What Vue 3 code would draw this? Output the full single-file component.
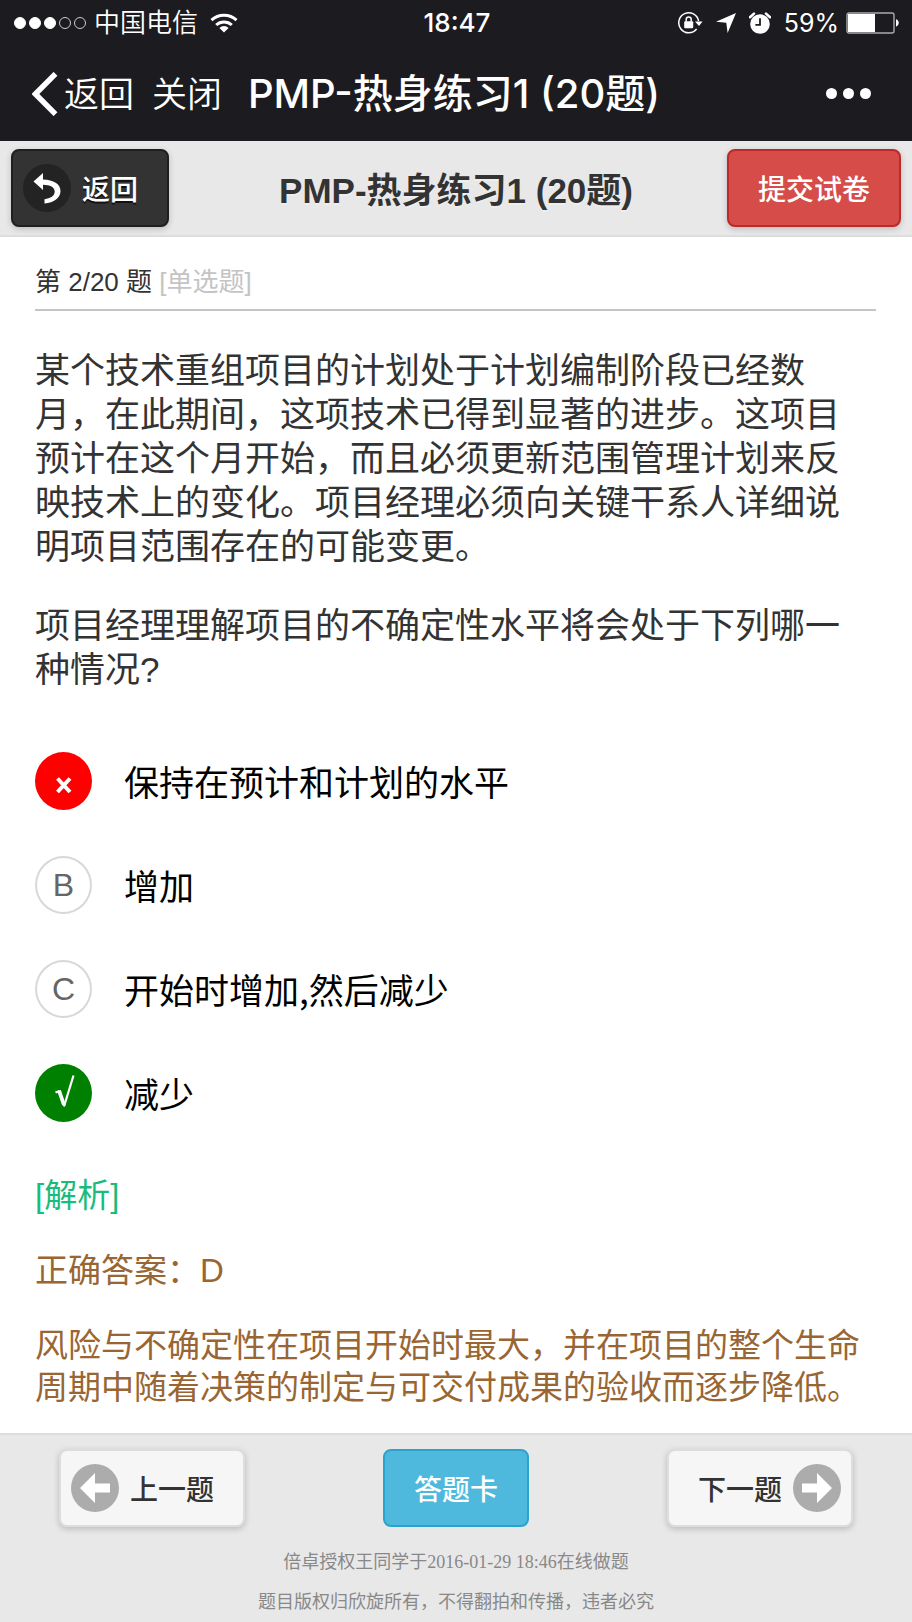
<template>
  <div class="page" lang="zh-CN">
    <div class="top">
      <div class="status-bar">
        <div class="status-left">
          <span class="signal">
            <i v-for="n in 5" :key="n" :class="{ on: n <= 3 }"></i>
          </span>
          <span class="carrier">中国电信</span>
          <svg class="wifi" width="28" height="20" viewBox="0 0 28 20" fill="none" stroke="#fff" stroke-width="3">
            <path d="M1.5 7.2a18 18 0 0 1 25 0" />
            <path d="M6.2 12a11.5 11.5 0 0 1 15.6 0" />
            <path d="M14 19.5l-4.6-4.6a6.8 6.8 0 0 1 9.2 0z" fill="#fff" stroke="none" />
          </svg>
        </div>
        <span class="time">18:47</span>
        <div class="status-right">
          <svg width="26" height="24" viewBox="0 0 26 24" fill="none" stroke="#fff" stroke-width="1.5">
            <path d="M21.6 10a10 10 0 1 0-2 8" />
            <path d="M18 10.5h7.6L22 15z" fill="#fff" stroke="none" />
            <path d="M9.2 10.5V8.6a2.5 2.5 0 0 1 5 0v1.9" />
            <rect x="7.2" y="10.3" width="9" height="7" rx="1" fill="#fff" stroke="none" />
          </svg>
          <svg width="20" height="20" viewBox="0 0 20 20" fill="#fff">
            <path d="M20 0L11.6 20 10.3 9.7 0 8.8z" />
          </svg>
          <svg width="22" height="22" viewBox="0 0 22 22" fill="none">
            <circle cx="11" cy="12" r="9.8" fill="#fff" />
            <path d="M1 5.2L5 1.6M21 5.2L17 1.6" stroke="#fff" stroke-width="2.6" stroke-linecap="round" />
            <path d="M11 6.2v6.6H6.4" stroke="#1c1b20" stroke-width="1.8" />
          </svg>
          <span class="percent">59%</span>
          <svg width="54" height="22" viewBox="0 0 54 22" fill="none">
            <rect x="1" y="1" width="47" height="20" rx="2" stroke="#aaa" stroke-width="1.4" />
            <path d="M2 2h27v18H2z" fill="#fff" />
            <path d="M50 7.2a4 4 0 0 1 0 7.6z" fill="#fff" />
          </svg>
        </div>
      </div>

      <nav class="nav-bar">
        <div class="nav-left">
          <a href="#" class="nav-back">
            <svg width="26" height="44" viewBox="0 0 26 44" fill="none" stroke="#fff" stroke-width="5.4">
              <path d="M23.5 1.800L3.400 22l20.100 20.200" />
            </svg>
            返回
          </a>
          <a href="#">关闭</a>
        </div>
        <span class="nav-title">PMP-热身练习1 (20题)</span>
        <button type="button" class="more" aria-label="更多"><i></i><i></i><i></i></button>
      </nav>
    </div>

    <header class="header">
      <button type="button" class="btn btn-dark">
        <svg width="48" height="48" viewBox="0 0 48 48">
          <circle cx="24" cy="24" r="24" fill="#232323" />
          <path d="M20 9v6.500c10.500.2 17.500 4.500 17.500 11.500 0 7-6.500 11.800-16 12.500v-4.300c6-.7 10.200-3.400 10.200-7.700 0-4.200-4.500-6.500-11.700-6.700v5.200L10.500 17.500z" fill="#fff" />
        </svg>
        返回
      </button>
      <h1>PMP-热身练习1 (20题)</h1>
      <button type="button" class="btn btn-red">提交试卷</button>
    </header>

    <main class="content">
      <p class="count">第 2/20 题 <span>[单选题]</span></p>

      <div class="question">
        <p v-for="text in question" :key="text">{{ text }}</p>
      </div>

      <div class="options">
        <label v-for="item in options" :key="item.key" class="option">
          <span class="mark" :class="item.state">
            <input type="radio" name="answer" :value="item.key" :checked="item.state === 'wrong'" />
            <svg v-if="item.state === 'wrong'" width="57" height="58" viewBox="0 0 57 58" fill="none">
              <path d="M22.500 26.500l12.500 13.500M35 26.500L22.500 40" stroke="#fff" stroke-width="4" />
            </svg>
            <svg v-else-if="item.state === 'right'" width="57" height="58" viewBox="0 0 57 58" fill="none">
              <path d="M20.500 28.500l4-1.500" stroke="#fff" stroke-width="2.400" />
              <path d="M24 26.500l5 14.500" stroke="#fff" stroke-width="3.800" />
              <path d="M29 42.500l9.500-31" stroke="#fff" stroke-width="2.200" />
            </svg>
            <b v-else>{{ item.key }}</b>
          </span>
          <span>{{ item.text }}</span>
        </label>
      </div>

      <section class="analysis">
        <p class="tag">[解析]</p>
        <p>正确答案：D</p>
        <p>风险与不确定性在项目开始时最大，并在项目的整个生命周期中随着决策的制定与可交付成果的验收而逐步降低。</p>
      </section>
    </main>

    <footer class="footer">
      <div class="actions">
        <div>
          <button type="button" class="btn btn-light prev">
            <svg width="48" height="48" viewBox="0 0 48 48">
              <circle cx="24" cy="24" r="24" fill="#acacac" />
              <path d="M9 24L24 9v10.500h15v9H24V39z" fill="#fff" />
            </svg>
            上一题
          </button>
        </div>
        <button type="button" class="btn btn-blue">答题卡</button>
        <div class="end">
          <button type="button" class="btn btn-light next">
            下一题
            <svg width="48" height="48" viewBox="0 0 48 48">
              <circle cx="24" cy="24" r="24" fill="#acacac" />
              <path d="M39 24L24 9v10.500H9v9h15V39z" fill="#fff" />
            </svg>
          </button>
        </div>
      </div>
      <p>倍卓授权王同学于2016-01-29 18:46在线做题</p>
      <p>题目版权归欣旋所有，不得翻拍和传播，违者必究</p>
    </footer>
  </div>
</template>

<script setup>
const question = [
  '某个技术重组项目的计划处于计划编制阶段已经数月，在此期间，这项技术已得到显著的进步。这项目预计在这个月开始，而且必须更新范围管理计划来反映技术上的变化。项目经理必须向关键干系人详细说明项目范围存在的可能变更。',
  '项目经理理解项目的不确定性水平将会处于下列哪一种情况?',
];

const options = [
  { key: 'A', text: '保持在预计和计划的水平', state: 'wrong' },
  { key: 'B', text: '增加', state: '' },
  { key: 'C', text: '开始时增加,然后减少', state: '' },
  { key: 'D', text: '减少', state: 'right' },
];
</script>

<style>
body {
  background: #fff;
}
</style>

<style scoped>
.page {
  display: flex;
  flex-direction: column;
  min-height: 100vh;
  font-family: "Liberation Sans", "Noto Sans CJK SC", sans-serif;
  color: #333;
}
.page * {
  box-sizing: border-box;
}
p,
h1 {
  margin: 0;
}
svg {
  display: block;
  flex: none;
}
button {
  font-family: inherit;
  cursor: pointer;
}

/* 状态栏 + 导航栏 */
.top {
  background: #1c1b20;
  color: #fff;
  font-family: Inter, "Noto Sans CJK SC", sans-serif;
  line-height: 1.2;
}
.status-bar {
  display: grid;
  grid-template-columns: 1fr auto 1fr;
  align-items: center;
  height: 46px;
  padding: 0 12px 0 14px;
  font-size: 26px;
}
.status-left,
.status-right,
.signal {
  display: flex;
  align-items: center;
}
.signal {
  gap: 3px;
}
.signal i {
  width: 12px;
  height: 12px;
  border: 1px solid #ccc;
  border-radius: 50%;
}
.signal i.on {
  border-color: #fff;
  background: #fff;
}
.carrier {
  margin: 0 12px 0 8px;
  font-weight: 350;
}
.time {
  font-weight: 500;
}
.status-right {
  justify-content: flex-end;
  gap: 13px;
}
.percent {
  margin-right: -6px;
  font-size: 25px;
}
.nav-bar {
  display: grid;
  grid-template-columns: 1fr auto 1fr;
  align-items: center;
  height: 95px;
  padding: 0 36px 0 32px;
}
.nav-left {
  display: flex;
  align-items: center;
  gap: 18px;
  font-size: 35px;
  font-weight: 350;
}
.nav-left a {
  color: #fff;
  text-decoration: none;
}
.nav-back {
  display: flex;
  align-items: center;
  gap: 6px;
}
.nav-title {
  font-size: 40px;
  font-weight: 500;
  white-space: nowrap;
}
.more {
  display: flex;
  justify-self: end;
  gap: 6px;
  padding: 5px;
  border: 0;
  background: none;
}
.more i {
  width: 11px;
  height: 11px;
  border-radius: 50%;
  background: #fff;
}

/* 页头 */
.header {
  display: grid;
  grid-template-columns: 1fr auto 1fr;
  align-items: center;
  padding: 8px 11px;
  border-bottom: 2px solid #ddd;
  background: #e8e8e8;
}
h1 {
  padding-top: 6px;
  font-size: 35px;
  line-height: 44px;
  font-weight: 700;
  white-space: nowrap;
  text-shadow: 0 2px 0 #eee;
}
.btn {
  display: flex;
  align-items: center;
  justify-content: center;
  height: 78px;
  border: 2px solid #ddd;
  border-radius: 8px;
  font-family: "Noto Sans CJK SC", sans-serif;
  font-size: 28px;
  line-height: 36px;
  font-weight: 500;
  white-space: nowrap;
  box-shadow: 0 2px 6px rgba(0, 0, 0, 0.2);
}
.btn-dark {
  justify-self: start;
  gap: 11px;
  padding: 0 29px 0 10px;
  border-color: #1f1f1f;
  background: #333;
  color: #fff;
  text-shadow: 0 2px 0 #111;
}
.btn-red {
  justify-self: end;
  padding: 0 29px;
  border-color: #bb2a27;
  background: #d54c49;
  color: #fff;
}
.btn-blue {
  padding: 0 29px;
  border-color: #2aa3cd;
  background: #4eb9dc;
  color: #fff;
  box-shadow: none;
}
.btn-light {
  gap: 11px;
  background: #f6f6f6;
  color: #333;
}
.prev {
  padding: 0 29px 0 10px;
}
.next {
  padding: 0 10px 0 29px;
}

/* 题目 */
.content {
  flex: 1;
  padding: 24px 36px 20px 35px;
}
.count {
  padding-bottom: 6px;
  border-bottom: 2px solid #c4c4c4;
  font-size: 26px;
  line-height: 42px;
}
.count span {
  color: #c4c4c4;
}
.question {
  padding: 38px 4px 60px 0;
}
.question p {
  font-size: 35px;
  line-height: 44px;
}
.question p + p {
  margin-top: 35px;
}
.options {
  display: flex;
  flex-direction: column;
  gap: 46px;
}
.option {
  display: flex;
  align-items: center;
  gap: 32px;
  color: #000;
  font-family: "Noto Sans CJK SC", sans-serif;
  font-size: 35px;
  line-height: 44px;
}
.mark {
  display: grid;
  flex: none;
  place-items: center;
  width: 57px;
  height: 58px;
}
.mark > * {
  grid-area: 1 / 1;
}
.mark input {
  width: 57px;
  height: 58px;
  margin: 0;
  appearance: none;
  border: 2px solid #d8d8d8;
  border-radius: 50%;
  background: #fff;
}
.mark.wrong input {
  border-color: #f00;
  background: #f00;
}
.mark.right input {
  border-color: #008000;
  background: #008000;
}
.mark b {
  color: #666;
  font-family: "Liberation Sans", sans-serif;
  font-size: 32px;
  font-weight: 400;
}
.mark svg,
.mark b {
  z-index: 1;
}

/* 解析 */
.analysis {
  display: flex;
  flex-direction: column;
  gap: 33px;
  padding-top: 53px;
  color: #996633;
  font-size: 33px;
  line-height: 42px;
}
.tag {
  color: #1abc7c;
}

/* 底部 */
.footer {
  padding: 14px 59px 0;
  border-top: 2px solid #ddd;
  background: #e8e8e8;
  color: #888;
  font-family: "Liberation Serif", "Noto Sans CJK SC", serif;
  font-size: 18px;
  line-height: 40px;
  text-align: center;
}
.actions {
  display: grid;
  grid-template-columns: 1fr auto 1fr;
  margin-bottom: 15px;
}
.end {
  justify-self: end;
}
</style>
